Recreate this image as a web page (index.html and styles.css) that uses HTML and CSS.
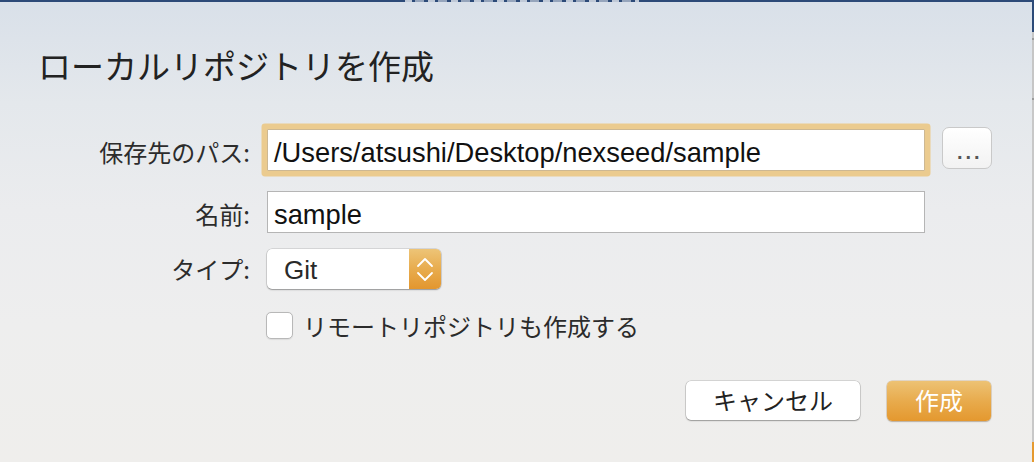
FILE: index.html
```html
<!DOCTYPE html>
<html lang="ja">
<head>
<meta charset="utf-8">
<title>ローカルリポジトリを作成</title>
<link rel="stylesheet" href="styles.css">
</head>
<body>
<div class="screen">
  <div class="topbar"><div class="topbar-frag"></div></div>
  <div class="main">
    <div class="dialog">
      <h1 class="title">ローカルリポジトリを作成</h1>
      <div class="form">
        <div class="row row-path">
          <div class="label">保存先のパス:</div>
          <div class="field field-focus">/Users/atsushi/Desktop/nexseed/sample</div>
          <div class="browse">...</div>
        </div>
        <div class="row row-name">
          <div class="label">名前:</div>
          <div class="field">sample</div>
        </div>
        <div class="row row-type">
          <div class="label">タイプ:</div>
          <div class="select">
            <div class="select-value">Git</div>
            <div class="select-arrows">
              <svg width="32" height="40" viewBox="0 0 32 40">
                <path d="M9 17 L16 10 L23 17" fill="none" stroke="#fff" stroke-width="1.8" stroke-linecap="round" stroke-linejoin="round"/>
                <path d="M9 24 L16 31 L23 24" fill="none" stroke="#fff" stroke-width="1.8" stroke-linecap="round" stroke-linejoin="round"/>
              </svg>
            </div>
          </div>
        </div>
        <div class="row row-check">
          <div class="checkbox"></div>
          <div class="check-text">リモートリポジトリも作成する</div>
        </div>
      </div>
      <div class="footer">
        <div class="btn btn-cancel">キャンセル</div>
        <div class="btn btn-primary">作成</div>
      </div>
    </div>
    <div class="edge"></div>
  </div>
</div>
</body>
</html>
```
FILE: styles.css
```css
html, body {
  margin: 0;
  padding: 0;
}
body {
  width: 1034px;
  height: 462px;
  overflow: hidden;
  font-family: "Noto Sans CJK JP", sans-serif;
}
.screen {
  width: 1034px;
  height: 462px;
  display: flex;
  flex-direction: column;
}
.topbar {
  height: 2px;
  background: #2c4a78;
  display: flex;
  justify-content: center;
  flex-shrink: 0;
}
.topbar-frag {
  width: 234px;
  margin-left: 10px;
  height: 2px;
  background: repeating-linear-gradient(90deg, rgba(255,255,255,0.7) 0 7px, transparent 7px 10px, rgba(255,255,255,0.5) 10px 19px, transparent 19px 23px);
}
.main {
  flex: 1;
  display: flex;
}
.dialog {
  width: 1032px;
  background: linear-gradient(180deg, #d9e0e9 0%, #e4e8ec 22%, #ebecee 45%, #eeeeee 70%, #efeeec 100%);
  padding-top: 43px;
  box-sizing: border-box;
}
.edge {
  width: 2px;
  background: linear-gradient(180deg, #2c4a78 0 30px, #c6c6c6 30px 36px, #9a9a9a 36px 38px, #c6c6c6 38px 96px, #9a9a9a 96px 98px, #c8c8c8 98px 440px, #e59a30 440px 100%);
}
.title {
  margin: 0;
  padding-left: 38px;
  font-size: 33px;
  line-height: 40px;
  font-weight: 400;
  color: #222;
}
.form {
  margin-top: 44px;
}
.row {
  display: flex;
  align-items: baseline;
}
.row-name {
  margin-top: 20px;
}
.row-type {
  margin-top: 16px;
}
.row-check {
  margin-top: 23px;
  align-items: center;
  padding-left: 266px;
}
.label {
  width: 250px;
  text-align: right;
  font-size: 24px;
  line-height: 24px;
  color: #2c2c2c;
  flex-shrink: 0;
}
.field {
  margin-left: 17px;
  width: 658px;
  height: 42px;
  box-sizing: border-box;
  border: 1px solid #b5b5b5;
  background: #fff;
  padding: 7px 0 0 6px;
  font-family: "Liberation Sans", sans-serif;
  font-size: 27.3px;
  line-height: 32px;
  color: #111;
}
.field-focus {
  border-color: #cdb893;
  box-shadow: 0 0 0 5.5px #ebcb8f;
  border-radius: 1px;
}
.browse {
  align-self: flex-start;
  margin-top: -2px;
  margin-left: 17px;
  width: 50px;
  height: 42px;
  box-sizing: border-box;
  border: 1px solid #c9c9c9;
  border-radius: 7px;
  background: linear-gradient(180deg, #ffffff 0%, #f2f2f2 100%);
  font-family: "Liberation Sans", sans-serif;
  font-size: 20px;
  font-weight: 700;
  letter-spacing: 3px;
  line-height: 20px;
  padding-top: 14px;
  padding-left: 14px;
  color: #555;
}
.select {
  margin-left: 17px;
  width: 174px;
  height: 40px;
  display: flex;
  border-radius: 5px;
  background: #fff;
  box-shadow: 0 0 0 0.5px rgba(0,0,0,0.18), 0 1px 1.5px rgba(0,0,0,0.3);
}
.select-value {
  flex: 1;
  padding: 3px 0 0 17px;
  font-family: "Liberation Sans", sans-serif;
  font-size: 26px;
  line-height: 37px;
  color: #2a2a2a;
}
.select-arrows {
  width: 32px;
  height: 40px;
  border-radius: 0 5px 5px 0;
  background: linear-gradient(180deg, #edc477 0%, #e8ac4e 50%, #e3962e 100%);
}
.select-arrows svg {
  display: block;
}
.checkbox {
  width: 27px;
  height: 27px;
  box-sizing: border-box;
  border: 1px solid #b8b8b8;
  border-radius: 5px;
  background: #fff;
  box-shadow: 0 0.5px 1px rgba(0,0,0,0.08);
}
.check-text {
  margin-left: 10px;
  font-size: 24px;
  line-height: 27px;
  color: #2b2b2b;
}
.footer {
  margin-top: 42px;
  display: flex;
  justify-content: flex-end;
  align-items: flex-start;
  padding-right: 41px;
  gap: 27px;
}
.btn {
  box-sizing: border-box;
  border-radius: 5px;
  font-size: 24px;
  text-align: center;
}
.btn-cancel {
  width: 174px;
  height: 39px;
  line-height: 37px;
  background: #fff;
  color: #222;
  box-shadow: 0 0 0 0.5px rgba(0,0,0,0.22), 0 1px 1.5px rgba(0,0,0,0.28);
}
.btn-primary {
  width: 104px;
  height: 40px;
  line-height: 38px;
  color: #fff;
  background: linear-gradient(180deg, #edc274 0%, #e8ab4d 50%, #e4982f 100%);
  box-shadow: 0 0 0 0.5px rgba(160,100,20,0.35), 0 1px 1.5px rgba(0,0,0,0.2);
}
```
